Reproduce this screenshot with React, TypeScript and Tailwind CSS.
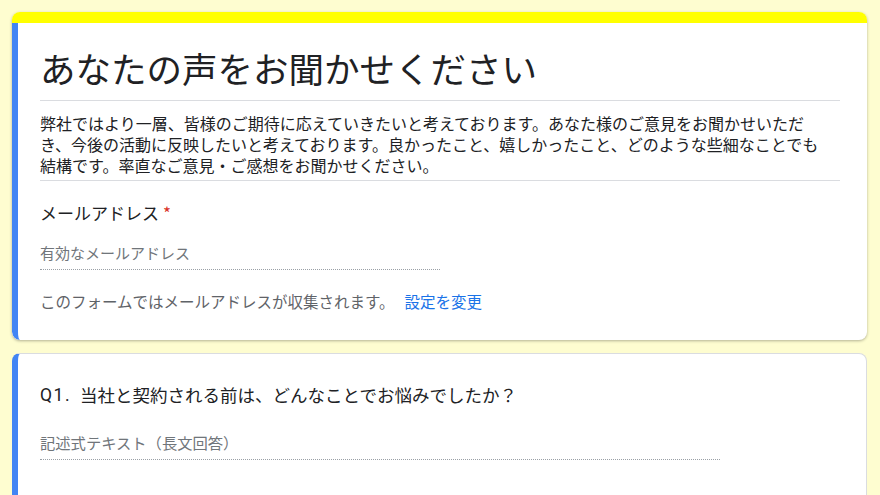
import React from "react";

export default function App() {
  const jp = { fontFamily: '"Noto Sans CJK JP", "Noto Sans", sans-serif' };
  return (
    <div className="w-[880px] h-[495px] overflow-hidden bg-[#fefdd0] pt-[12px] pl-[12px] pr-[13px]" style={jp}>
      {/* Card 1 */}
      <div className="rounded-lg bg-white shadow-[0_1px_3px_rgba(0,0,0,0.3)] overflow-hidden">
        <div className="h-[11px] bg-[#ffff00]" />
        <div className="border-l-[6px] border-[#4285f4] pl-[22px] pr-[27px] pb-[28px] rounded-bl-lg">
          <h1 className="pt-[25px] text-[35.5px] leading-[40px] text-[#202124] font-normal">
            あなたの声をお聞かせください
          </h1>
          <div className="mt-[12px] border-t border-[#dadce0]" />
          <p className="pt-[12px] pb-[4px] text-[16px] leading-[21px] text-[#202124]">
            弊社ではより一層、皆様のご期待に応えていきたいと考えております。あなた様のご意見をお聞かせいただ
            <br />
            き、今後の活動に反映したいと考えております。良かったこと、嬉しかったこと、どのような些細なことでも
            <br />
            結構です。率直なご意見・ご感想をお聞かせください。
          </p>
          <div className="border-t border-[#dadce0]" />
          <div className="mt-[20px] text-[17px] leading-[24px] text-[#202124]">
            メールアドレス<span className="text-[#d93025] ml-[4px]">*</span>
          </div>
          <div className="mt-[17px] w-[400px] border-b border-dotted border-[#9aa0a6] pb-[5px] text-[15px] leading-[22px] text-[#70757a]">
            有効なメールアドレス
          </div>
          <div className="mt-[20px] flex items-center gap-[10px] text-[15.5px] leading-[22px]">
            <span className="text-[#5f6368]">このフォームではメールアドレスが収集されます。</span>
            <span className="text-[#1a73e8]">設定を変更</span>
          </div>
        </div>
      </div>

      {/* Card 2 */}
      <div className="mt-[13px] rounded-t-lg bg-white border border-[#dadce0] border-l-[6px] border-l-[#4285f4] h-[200px] pl-[22px] pr-[27px]">
        <div className="pt-[29px] flex items-center text-[17.5px] leading-[24px] text-[#202124]">
          <span className="w-[40px] tracking-[1.5px]" style={{ fontFamily: 'Roboto, "Noto Sans CJK JP", sans-serif' }}>Q1.</span>
          <span>当社と契約される前は、どんなことでお悩みでしたか？</span>
        </div>
        <div className="mt-[24px] w-[680px] border-b border-dotted border-[#9aa0a6] pb-[6px] text-[15.3px] leading-[22px] text-[#70757a]">
          記述式テキスト（長文回答）
        </div>
      </div>
    </div>
  );
}
